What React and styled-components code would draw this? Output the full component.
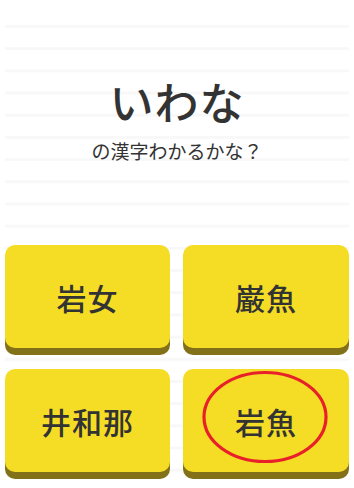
import React from 'react';
import styled, { createGlobalStyle } from 'styled-components';

const GlobalStyle = createGlobalStyle`
  html, body {
    margin: 0;
    padding: 0;
    background: #ffffff;
  }
  body {
    font-family: "Noto Sans CJK JP", "Noto Sans", sans-serif;
    color: #333333;
  }
`;

const Page = styled.div`
  width: 354px;
  height: 488px;
  box-sizing: border-box;
  padding: 0 5px;
  overflow: hidden;
`;

// ruled-notebook backdrop: first rule at y=25, then every 22.2px
const Sheet = styled.div`
  height: 100%;
  box-sizing: border-box;
  padding-top: 25px;
  background-image: linear-gradient(
    to bottom,
    #f8f8f8 0px,
    #f8f8f8 3px,
    transparent 3px
  );
  background-size: 100% 22.2px;
  background-origin: content-box;
  background-clip: content-box;
`;

const Question = styled.div`
  height: 220px;
  display: flex;
  flex-direction: column;
  align-items: center;
  padding-top: 46px;
  box-sizing: border-box;
`;

const Word = styled.h1`
  margin: 0;
  font-size: 44px;
  font-weight: 500;
  line-height: 60px;
  letter-spacing: 1px;
  color: #333333;
`;

const Prompt = styled.p`
  margin: 7px 0 0;
  font-size: 19px;
  font-weight: 400;
  line-height: 26px;
  color: #333333;
`;

const Choices = styled.div`
  display: grid;
  grid-template-columns: 165px 166px;
  column-gap: 13px;
  row-gap: 21px;
`;

const Choice = styled.button`
  position: relative;
  height: 103px;
  border: none;
  border-radius: 10px;
  background: #f5dd26;
  box-shadow: 0 7px 0 #83711a;
  font-family: "Noto Sans CJK JP", "Noto Sans", sans-serif;
  font-size: 30px;
  font-weight: 500;
  letter-spacing: 1px;
  color: #333333;
  padding: 0;
  cursor: pointer;
`;

const Mark = styled.svg`
  position: absolute;
  left: 18px;
  top: 1px;
  pointer-events: none;
`;

const choices = [
  { label: '岩女' },
  { label: '巌魚' },
  { label: '井和那' },
  { label: '岩魚', answer: true },
];

const App = () => {
  return (
    <>
      <GlobalStyle />
      <Page>
        <Sheet>
          <Question>
            <Word>いわな</Word>
            <Prompt>の漢字わかるかな？</Prompt>
          </Question>
          <Choices>
            {choices.map((c) => (
              <Choice key={c.label}>
                {c.label}
                {c.answer && (
                  <Mark width="128" height="96" viewBox="0 0 128 96">
                    <ellipse cx="64" cy="47" rx="61" ry="44.5" fill="none" stroke="#e8202a" strokeWidth="3.2" />
                  </Mark>
                )}
              </Choice>
            ))}
          </Choices>
        </Sheet>
      </Page>
    </>
  );
};

export default App;
